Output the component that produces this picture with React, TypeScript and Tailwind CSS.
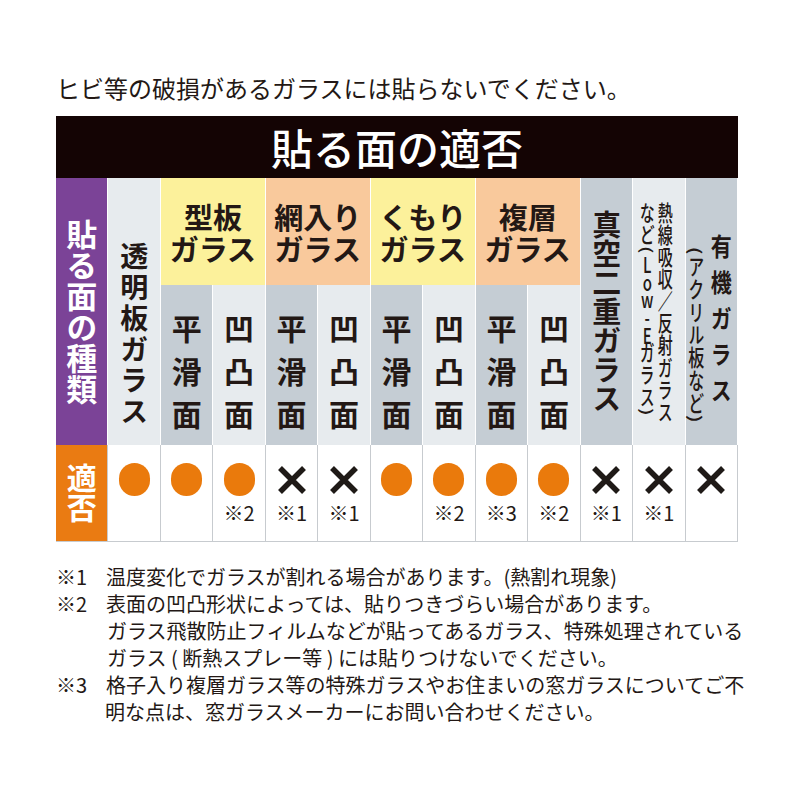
import React from "react"

// 貼る面の適否 table

type Result = { ok: boolean; note?: string }

const results: Result[] = [
    { ok: true },
    { ok: true },
    { ok: true, note: "※2" },
    { ok: false, note: "※1" },
    { ok: false, note: "※1" },
    { ok: true },
    { ok: true, note: "※2" },
    { ok: true, note: "※3" },
    { ok: true, note: "※2" },
    { ok: false, note: "※1" },
    { ok: false, note: "※1" },
    { ok: false },
]

function Cross() {
    return (
        <svg width="30" height="28" viewBox="0 0 30 28">
            <path d="M3 2 L27 26 M27 2 L3 26" stroke="#1f1a17" strokeWidth="5.5" fill="none" />
        </svg>
    )
}

function Dot() {
    return <div className="w-[31px] h-[33px] rounded-full bg-[#ea7a0c]" />
}

function SubHead({ flat }: { flat: boolean }) {
    const chars = flat ? ["平", "滑", "面"] : ["凹", "凸", "面"]
    return (
        <div
            className={
                flat
                    ? "bg-[#c5cdd4] flex flex-col items-center pt-[21px] text-[30px] font-bold leading-[43px]"
                    : "bg-[#e7ebee] flex flex-col items-center pt-[21px] text-[30px] font-bold leading-[43px]"
            }
        >
            {chars.map((c, i) => (
                <span key={i}>{c}</span>
            ))}
        </div>
    )
}

function GroupHead({ top, yellow }: { top: string; yellow: boolean }) {
    return (
        <div
            className={
                yellow
                    ? "col-span-2 bg-[#fcf19b] flex flex-col items-center justify-center text-[29px] font-bold leading-[32px]"
                    : "col-span-2 bg-[#f9c99c] flex flex-col items-center justify-center text-[29px] font-bold leading-[32px]"
            }
        >
            <span>{top}</span>
            <span>ガラス</span>
        </div>
    )
}

export default function App() {
    return (
        <div className="w-[800px] h-[800px] bg-white pl-[56px] text-[#231815] font-['Noto_Sans_CJK_JP','Noto_Sans',sans-serif]">
            <p className="pt-[72px] text-[24px] leading-[32px]">ヒビ等の破損があるガラスには貼らないでください。</p>

            <div className="w-[682px] mt-[12px]">
                <div className="h-[62px] bg-[#140404] flex items-center justify-center">
                    <span className="text-white text-[42px] font-medium leading-none">貼る面の適否</span>
                </div>

                <div className="grid grid-cols-[repeat(13,minmax(0,1fr))] grid-rows-[107px_160px] gap-x-px bg-white pr-px">
                    <div className="row-span-2 bg-[#7b4397] flex items-center justify-center">
                        <div className="[writing-mode:vertical-rl] text-white font-bold text-[31px] leading-none">貼る面の種類</div>
                    </div>
                    <div className="row-span-2 bg-[#e7ebee] flex items-end justify-center pb-[17px]">
                        <div className="[writing-mode:vertical-rl] font-bold text-[28px] tracking-[3px] leading-none">透明板ガラス</div>
                    </div>
                    <GroupHead top="型板" yellow />
                    <GroupHead top="網入り" yellow={false} />
                    <GroupHead top="くもり" yellow />
                    <GroupHead top="複層" yellow={false} />
                    <div className="row-span-2 bg-[#c5cdd4] flex items-center justify-center">
                        <div className="[writing-mode:vertical-rl] font-bold text-[29px] leading-none">真空二重ガラス</div>
                    </div>
                    <div className="row-span-2 bg-[#e7ebee] flex items-center justify-center pr-[6px]">
                        <div className="[writing-mode:vertical-rl] text-[15px] leading-[18px] font-medium scale-y-[1.47]">
                            熱線吸収／反射ガラス
                            <br />
                            など(<span className="[text-orientation:upright] tracking-[-3px]">Low-E</span>ガラス)
                        </div>
                    </div>
                    <div className="row-span-2 bg-[#c5cdd4] flex items-center justify-center gap-[6px] pr-[3px]">
                        <div className="[writing-mode:vertical-rl] text-[16px] leading-none font-medium scale-y-[1.43] mt-[47px]">(アクリル板など)</div>
                        <div className="[writing-mode:vertical-rl] text-[21px] leading-none font-bold tracking-[9px] scale-y-[1.2] mt-[24px]">有機ガラス</div>
                    </div>
                    <SubHead flat />
                    <SubHead flat={false} />
                    <SubHead flat />
                    <SubHead flat={false} />
                    <SubHead flat />
                    <SubHead flat={false} />
                    <SubHead flat />
                    <SubHead flat={false} />
                </div>

                <div className="grid grid-cols-[repeat(13,minmax(0,1fr))] h-[97px] gap-x-px bg-[#c7cbcf] pr-px pb-px">
                    <div className="bg-[#ea7b12] flex items-center justify-center">
                        <div className="[writing-mode:vertical-rl] text-white font-bold text-[30px] leading-none">適否</div>
                    </div>
                    {results.map((r, i) => (
                        <div key={i} className="bg-white flex flex-col items-center pt-[18px]">
                            <div className="h-[33px] flex items-center justify-center">{r.ok ? <Dot /> : <Cross />}</div>
                            {r.note && <span className="mt-[7px] text-[20px] leading-[20px]">{r.note}</span>}
                        </div>
                    ))}
                </div>
            </div>

            <div className="mt-[21px] text-[20px] leading-[27px] whitespace-nowrap">
                <div className="flex">
                    <span className="w-[50px] shrink-0">※1</span>
                    <span>温度変化でガラスが割れる場合があります。(熱割れ現象)</span>
                </div>
                <div className="flex">
                    <span className="w-[50px] shrink-0">※2</span>
                    <span>表面の凹凸形状によっては、貼りつきづらい場合があります。</span>
                </div>
                <div className="pl-[51px]">ガラス飛散防止フィルムなどが貼ってあるガラス、特殊処理されている</div>
                <div className="pl-[51px]">ガラス ( 断熱スプレー等 ) には貼りつけないでください。</div>
                <div className="flex">
                    <span className="w-[50px] shrink-0">※3</span>
                    <span>格子入り複層ガラス等の特殊ガラスやお住まいの窓ガラスについてご不</span>
                </div>
                <div className="pl-[49px]">明な点は、窓ガラスメーカーにお問い合わせください。</div>
            </div>
        </div>
    )
}
